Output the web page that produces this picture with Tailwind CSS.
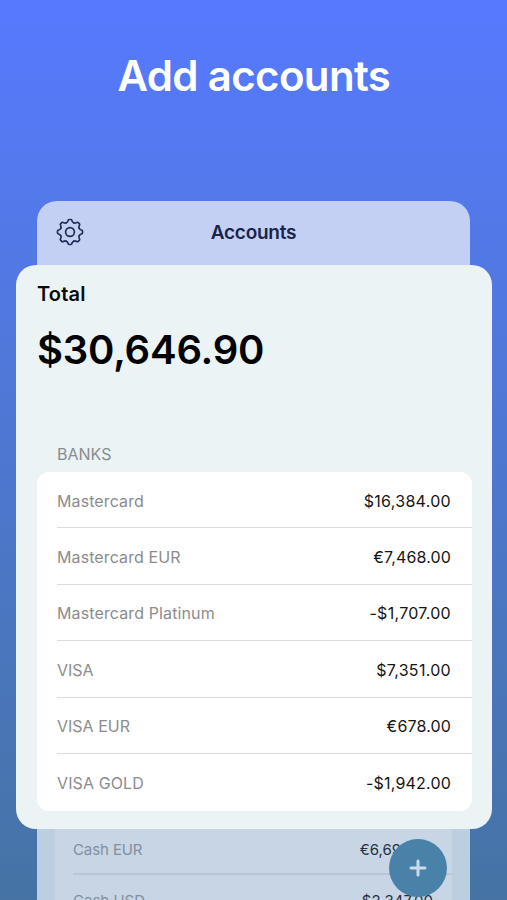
<!DOCTYPE html>
<html lang="en">
<head>
<meta charset="utf-8">
<title>Add accounts</title>
<script src="https://cdn.jsdelivr.net/npm/@tailwindcss/browser@4"></script>
</head>
<body class="h-[900px] w-[507px] overflow-hidden font-['Inter',sans-serif]">
<main class="relative flex h-[900px] flex-col overflow-hidden bg-linear-to-b from-[#5779ff] to-[#4673a4]">
  <h1 class="h-[201px] pt-[51px] pl-[117.5px] text-[42px] leading-[50px] font-semibold tracking-[-0.65px] whitespace-nowrap text-white">Add accounts</h1>

  <header class="relative ml-[37px] h-[84px] w-[433px] shrink-0 rounded-t-[20px] bg-[#c3d0f3]">
    <svg class="absolute top-[17px] left-[19px] size-7" viewBox="-14 -14 28 28" fill="none" stroke="#202c56" stroke-width="1.7" stroke-linecap="round" stroke-linejoin="round">
      <defs><path id="tooth" d="M-3.8-9.17C-3-9.5-2.5-9.9-2.2-10.8C-1.9-12-1.6-12.5-.9-12.5H.9C1.6-12.5 1.9-12 2.2-10.8C2.5-9.9 3-9.5 3.8-9.17"/></defs>
      <use href="#tooth"/><use href="#tooth" transform="rotate(45)"/><use href="#tooth" transform="rotate(90)"/><use href="#tooth" transform="rotate(135)"/>
      <use href="#tooth" transform="rotate(180)"/><use href="#tooth" transform="rotate(225)"/><use href="#tooth" transform="rotate(270)"/><use href="#tooth" transform="rotate(315)"/>
      <circle r="4.4"/>
    </svg>
    <h2 class="pt-[18px] text-center text-[19px] leading-7 font-semibold tracking-[-0.25px] text-[#192449]">Accounts</h2>
  </header>

  <section class="relative z-10 -mt-5 ml-4 h-[564px] w-[475.5px] shrink-0 rounded-[20px] bg-[#ebf3f5] px-[21px] pt-[15px]">
    <h3 class="text-[20px] leading-7 font-semibold tracking-[0.2px] text-[#080b0c]">Total</h3>
    <p class="mt-[17px] text-[40px] leading-[50px] font-semibold tracking-[-0.2px] text-black">$30,646.90</p>
    <h4 class="mt-[69px] pl-5 text-[16px] leading-5 text-[#888d90]">BANKS</h4>
    <ul class="mt-[8px] h-[339px] w-[435px] rounded-xl bg-white pl-5 text-[16px] text-[#8c8c8e]">
      <li class="flex h-[56.4px] items-center justify-between border-b border-[#dedee0] pt-[2px] pr-[21px]"><span class="tracking-[0.1px]">Mastercard</span><span class="tracking-[0.3px] text-[#151515]">$16,384.00</span></li>
      <li class="flex h-[56.4px] items-center justify-between border-b border-[#dedee0] pt-[2px] pr-[21px]"><span class="tracking-[0.1px]">Mastercard EUR</span><span class="tracking-[0.15px] text-[#151515]">€7,468.00</span></li>
      <li class="flex h-[56.4px] items-center justify-between border-b border-[#dedee0] pt-[2px] pr-[21px]"><span class="tracking-[0.12px]">Mastercard Platinum</span><span class="tracking-[0.3px] text-[#151515]">-$1,707.00</span></li>
      <li class="flex h-[56.4px] items-center justify-between border-b border-[#dedee0] pt-[2px] pr-[21px]"><span>VISA</span><span class="tracking-[0.3px] text-[#151515]">$7,351.00</span></li>
      <li class="flex h-[56.4px] items-center justify-between border-b border-[#dedee0] pt-[2px] pr-[21px]"><span>VISA EUR</span><span class="tracking-[0.15px] text-[#151515]">€678.00</span></li>
      <li class="flex h-[56.4px] items-center justify-between pt-px pr-[21px]"><span class="tracking-[0.1px]">VISA GOLD</span><span class="tracking-[0.2px] text-[#151515]">-$1,942.00</span></li>
    </ul>
  </section>

  <section class="ml-[37px] h-[71px] w-[433px] shrink-0 overflow-hidden bg-[#bccfe0] px-[18px]">
    <ul class="bg-[#c8d5e5] pl-[18px] text-[15px] text-[#818fa1]">
      <li class="flex h-[46px] items-center justify-between border-b-2 border-[#b9c6d7] pr-[19px]"><span class="-mt-0.5 tracking-[-0.1px]">Cash EUR</span><span class="-mt-0.5 text-[#26303f]">€6,690.00</span></li>
      <li class="flex h-[51px] items-center justify-between pt-0.5 pr-[19px]"><span>Cash USD</span><span class="text-[#26303f]">$2,347.00</span></li>
    </ul>
  </section>

  <button class="absolute top-[839px] left-[389px] z-20 flex size-[58px] items-center justify-center rounded-full bg-[#4982a8]" aria-label="Add account">
    <svg class="size-5" viewBox="0 0 20 20" fill="none" stroke="#c9dbec" stroke-width="3" stroke-linecap="round"><path d="M10 3v14M3 10h14"/></svg>
  </button>
</main>
</body>
</html>
